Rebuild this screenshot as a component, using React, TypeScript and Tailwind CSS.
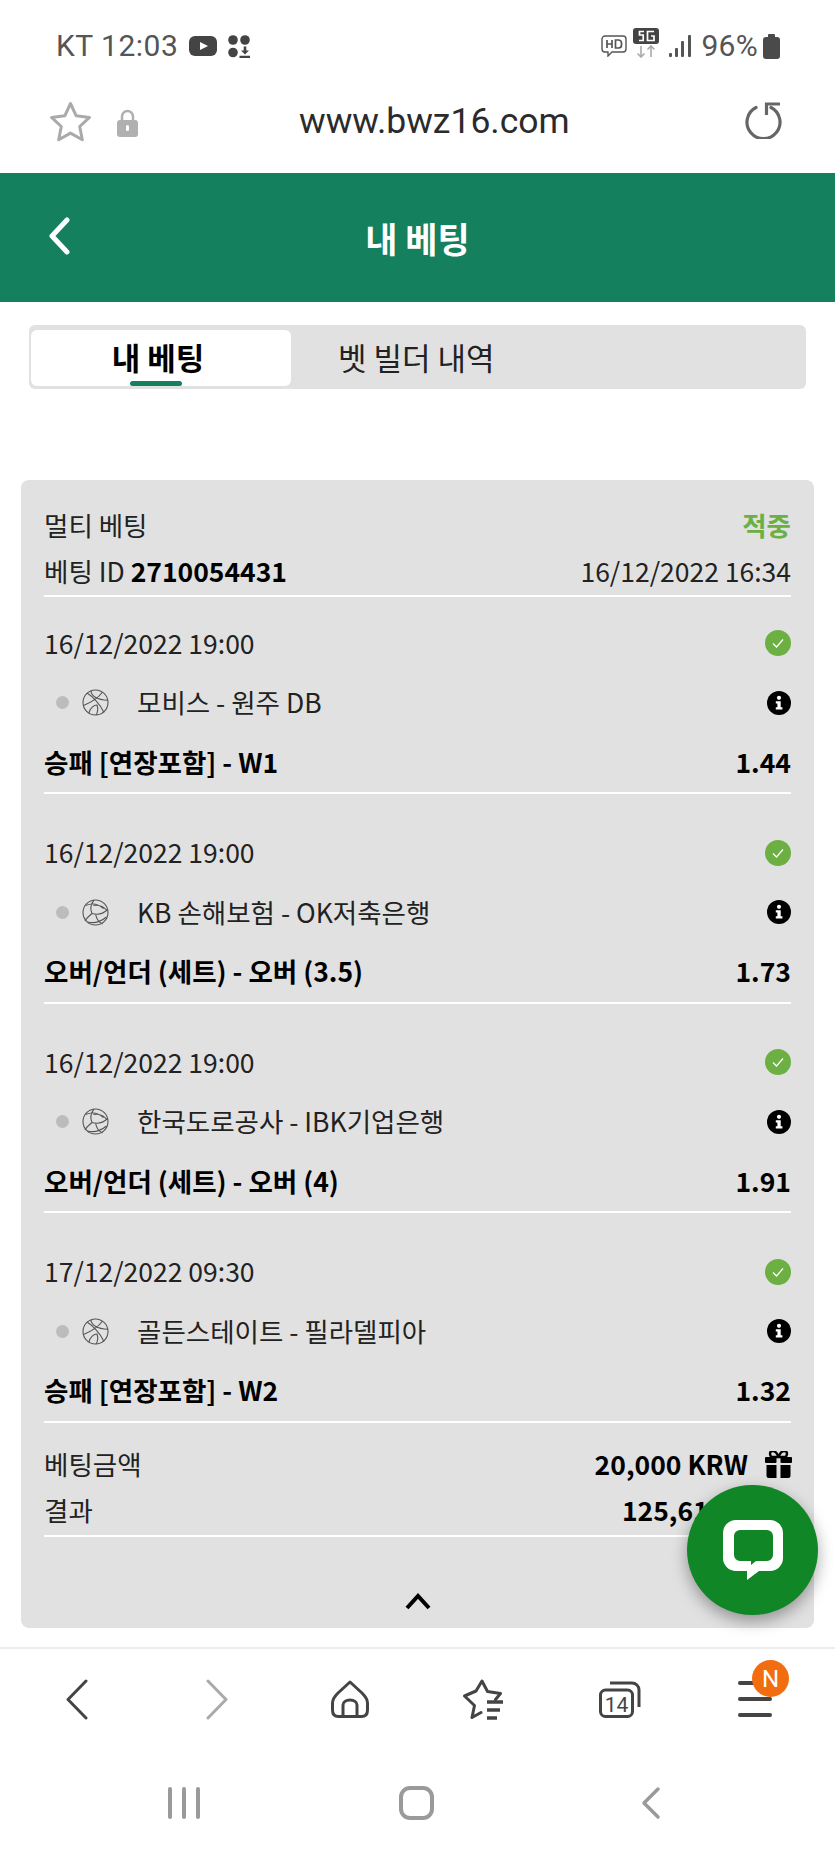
const bets = [
  { date: '16/12/2022 19:00', teams: '모비스 - 원주 DB', market: '승패 [연장포함] - W1', odds: '1.44', sport: 'basket' },
  { date: '16/12/2022 19:00', teams: 'KB 손해보험 - OK저축은행', market: '오버/언더 (세트) - 오버 (3.5)', odds: '1.73', sport: 'volley' },
  { date: '16/12/2022 19:00', teams: '한국도로공사 - IBK기업은행', market: '오버/언더 (세트) - 오버 (4)', odds: '1.91', sport: 'volley' },
  { date: '17/12/2022 09:30', teams: '골든스테이트 - 필라델피아', market: '승패 [연장포함] - W2', odds: '1.32', sport: 'basket' },
]

const BasketIcon = () => (
  <svg width="27" height="27" viewBox="0 0 27 27" fill="none" stroke="#555" strokeWidth="1.1">
    <circle cx="13.500" cy="13.500" r="12.500" />
    <path d="M5 4c5 3 13 11 17 19.500M20.500 3C17 8 10 13 1.500 16.500M9 1.800c0 5 6 9 17 9.500M7 24c1-5 5-8 8-8 1 3 1 7-1 10" />
  </svg>
)

const VolleyIcon = () => (
  <svg width="27" height="27" viewBox="0 0 27 27" fill="none" stroke="#555" strokeWidth="1.1">
    <circle cx="13.500" cy="13.500" r="12.500" />
    <path d="M12 1.200C9 5 8 10 10 14.500M3.500 6.500c6-2.500 13-1.500 18 3M25.500 12c-4-5-9-6.500-14-5.500M10 14.500c5.500 1.500 11 .5 15.500-4M10 14.500c-3 2.500-6 5-7 7.500M13.500 15c1 5 3.500 8.500 7 10M5.500 23c6 1.500 13 0 19-5" />
  </svg>
)

const CheckBadge = () => (
  <svg width="26" height="26" viewBox="0 0 26 26">
    <circle cx="13" cy="13" r="13" fill="#6cb043" />
    <path d="M8 13.500l3.500 3.500L18 9.500" fill="none" stroke="#fff" strokeWidth="1.200" />
  </svg>
)

const InfoBadge = () => (
  <svg width="24" height="24" viewBox="0 0 24 24">
    <circle cx="12" cy="12" r="12" fill="#000" />
    <circle cx="12" cy="6.800" r="2.100" fill="#fff" />
    <path d="M8.800 10.300h4.900V16.300h1.700v2.200H8.800v-2.200h1.600v-3.800H8.800z" fill="#fff" />
  </svg>
)

const GiftIcon = () => (
  <svg width="27" height="27" viewBox="0 0 27 27" fill="#000">
    <path d="M13.500 6C12 1.500 9.500 0 7.500 0 5 0 4 3.500 6.500 6zM13.500 6C15 1.500 17.500 0 19.500 0c2.500 0 3.500 3.500 1 6z" fill="none" stroke="#000" strokeWidth="2.400" />
    <rect x="0" y="6" width="11.500" height="6" rx="1" />
    <rect x="15.500" y="6" width="11.500" height="6" rx="1" />
    <path d="M1.500 14h10v13H4a2.500 2.500 0 0 1-2.500-2.500zM15.500 14h10v10.500A2.500 2.500 0 0 1 23 27h-7.500z" />
  </svg>
)

const StatusBar = () => (
  <div className="flex h-[92px] items-center justify-between pl-[56px] pr-[55px] font-['Roboto',sans-serif] text-[#555]">
    <div className="flex items-center">
      <span className="w-[133px] text-[30px] leading-none tracking-[0.5px]">KT 12:03</span>
      <svg width="28" height="20" viewBox="0 0 28 20">
        <rect width="28" height="20" rx="6" fill="#444" />
        <path d="M11 6l8 4-8 4z" fill="#fff" />
      </svg>
      <svg className="ml-[11px]" width="22" height="23" viewBox="0 0 22 23" fill="#444">
        <circle cx="5" cy="5" r="4.800" />
        <circle cx="17" cy="5" r="4.800" />
        <circle cx="5" cy="17.500" r="4.800" />
        <path d="M15.700 11.500h2.600v4h2.700l-4 4-4-4h2.700zM11.500 20.700h11V23h-11z" />
      </svg>
    </div>
    <div className="flex items-center">
      <svg width="26" height="22" viewBox="0 0 26 22" fill="none" stroke="#555" strokeWidth="1.400">
        <path d="M4 1h18a3 3 0 0 1 3 3v10a3 3 0 0 1-3 3H11l-4 4v-4H4a3 3 0 0 1-3-3V4a3 3 0 0 1 3-3z" />
        <path d="M6 5v8M11 5v8M6 9h5M14.500 5v8h3a3 3 0 0 0 3-3V8a3 3 0 0 0-3-3z" strokeWidth="1.700" />
      </svg>
      <svg className="ml-[6px] -mt-[6px]" width="26" height="30" viewBox="0 0 26 30">
        <rect width="26" height="16" rx="3" fill="#444" />
        <path d="M11 3.500H6.500v3.500h3.700v5.500H6M21 3.500h-6.500v9H21V8h-3" fill="none" stroke="#fff" strokeWidth="1.700" />
        <path d="M8 18v11M4.500 25.500L8 29l3.500-3.500M18 29V18M14.500 21.500L18 18l3.500 3.500" fill="none" stroke="#aaa" strokeWidth="1.600" />
      </svg>
      <svg className="ml-[10px]" width="22" height="22" viewBox="0 0 22 22" fill="#555">
        <rect x="0" y="18" width="3" height="4" rx="1" />
        <rect x="6" y="13" width="3" height="9" rx="1" />
        <rect x="12" y="6" width="3" height="16" rx="1" />
        <rect x="19" y="0" width="3" height="22" rx="1" />
      </svg>
      <span className="ml-[10px] text-[30px] leading-none tracking-[0.3px]">96%</span>
      <svg className="ml-[5px]" width="17" height="25" viewBox="0 0 17 25" fill="#4a4a4a">
        <rect x="5" width="7" height="4" rx="1" />
        <rect y="3" width="17" height="22" rx="3" />
      </svg>
    </div>
  </div>
)

const UrlBar = () => (
  <div className="flex h-[81px] items-center pb-[20px] pl-[49px] pr-[51px] font-['Roboto',sans-serif]">
    <svg width="43" height="43" viewBox="0 0 43 43" fill="none" stroke="#aaa" strokeWidth="3" strokeLinejoin="round">
      <path d="M21.500 2.500l5.700 12.300 13.300 1.600-9.800 9.100 2.600 13.200-11.800-6.600-11.800 6.600 2.600-13.200-9.800-9.100 13.300-1.600z" />
    </svg>
    <svg className="ml-[25px]" width="21" height="28" viewBox="0 0 21 28">
      <path d="M5 13V7.500a5.500 5.500 0 0 1 11 0V13" fill="none" stroke="#b0b0b0" strokeWidth="2.500" />
      <rect x="0" y="11" width="21" height="17" rx="3" fill="#b0b0b0" />
      <rect x="9" y="16" width="3" height="6" rx="1.500" fill="#fff" />
    </svg>
    <span className="ml-[161px] -mt-[2px] flex-1 text-[35.500px] leading-none text-[#2b2b2b]">www.bwz16.com</span>
    <svg className="-mt-[6px] -ml-[2px]" width="40" height="38" viewBox="0 0 40 38" fill="none" stroke="#666" strokeWidth="3.200">
      <path d="M12 6.500a16.500 16.500 0 1 0 15 0" strokeLinecap="round" />
      <path d="M22.500 14V3H36" />
    </svg>
  </div>
)

const BetRow = ({ bet, first }: { bet: (typeof bets)[number]; first: boolean }) => (
  <div className={first ? 'flex h-[197px] flex-col border-b-[2px] border-white pt-[16px]' : 'mt-[12.500px] flex h-[197px] flex-col border-b-[2px] border-white pt-[16px]'}>
    <div className="flex h-[60px] shrink-0 items-center justify-between">
      <span>{bet.date}</span>
      <span className="flex"><CheckBadge /></span>
    </div>
    <div className="flex h-[59px] shrink-0 items-center justify-between">
      <div className="flex items-center">
        <span className="ml-[12px] h-[13px] w-[13px] rounded-full bg-[#bcbcbc]" />
        <span className="ml-[13px] flex w-[27px]">{bet.sport === 'basket' ? <BasketIcon /> : <VolleyIcon />}</span>
        <span className="ml-[28px]">{bet.teams}</span>
      </div>
      <InfoBadge />
    </div>
    <div className="flex h-[60px] shrink-0 items-center justify-between font-bold text-black">
      <span>{bet.market}</span>
      <span>{bet.odds}</span>
    </div>
  </div>
)

const BottomBar = () => (
  <div className="mt-[19px] border-t-[2px] border-[#ececec]">
    <div className="flex h-[108px] items-center pb-[8px] pl-[65px]">
      <svg width="23" height="41" viewBox="0 0 23 41" fill="none" stroke="#444" strokeWidth="3">
        <path d="M21 2L3 20.500 21 39" strokeLinecap="round" strokeLinejoin="round" />
      </svg>
      <svg className="ml-[118px]" width="23" height="41" viewBox="0 0 23 41" fill="none" stroke="#aaa" strokeWidth="3">
        <path d="M2 2l18 18.500L2 39" strokeLinecap="round" strokeLinejoin="round" />
      </svg>
      <svg className="ml-[102px]" width="38" height="38" viewBox="0 0 38 38" fill="none" stroke="#444" strokeWidth="3">
        <path d="M19 2L7 13c-4 4-5.500 6-5.500 10v7c0 4 2 6.500 6 6.500h23c4 0 6-2.500 6-6.500v-7c0-4-1.500-6-5.500-10z" strokeLinejoin="round" />
        <path d="M12 36V25c0-3 3-5 7-5s7 2 7 5v11" />
      </svg>
      <svg className="ml-[93px]" width="42" height="41" viewBox="0 0 42 41" fill="none" stroke="#444" strokeWidth="3">
        <path d="M14 12L20 2l5.500 10.500 13 2-5 6M10 38.500l2.500-12-10-9.500 11.500-5M10 38.500l9-5" strokeLinejoin="round" strokeLinecap="round" />
        <path d="M25 23h16M25 31h13M25 39h10" strokeWidth="3.500" />
      </svg>
      <svg className="ml-[95px]" width="42" height="37" viewBox="0 0 42 37" fill="none" stroke="#444" strokeWidth="3">
        <rect x="1.500" y="9" width="32" height="26.500" rx="5" />
        <path d="M11 2h22a7 7 0 0 1 7 7v17" />
        <text x="17.500" y="31" textAnchor="middle" fontSize="21" fill="#444" stroke="none" fontFamily="Roboto">14</text>
      </svg>
      <div className="relative ml-[97px] flex w-[34px] flex-col gap-[12px]">
        <span className="h-[4px] rounded bg-[#444]" />
        <span className="h-[4px] rounded bg-[#444]" />
        <span className="h-[4px] rounded bg-[#444]" />
        <span className="absolute left-[14px] -top-[21px] flex h-[37px] w-[37px] items-center justify-center rounded-full bg-[#f26d0f] font-['Roboto',sans-serif] text-[24px] leading-none text-white">N</span>
      </div>
    </div>
    <div className="flex h-[92px] items-center pl-[168px]">
      <div className="flex gap-[10px]">
        <span className="h-[32px] w-[4px] rounded bg-[#9a9a9a]" />
        <span className="h-[32px] w-[4px] rounded bg-[#9a9a9a]" />
        <span className="h-[32px] w-[4px] rounded bg-[#9a9a9a]" />
      </div>
      <span className="ml-[199px] h-[34px] w-[35px] rounded-[11px] border-[4px] border-[#9a9a9a]" />
      <svg className="ml-[207px]" width="20" height="34" viewBox="0 0 20 34" fill="none" stroke="#9a9a9a" strokeWidth="3.500">
        <path d="M17 3L3 17l14 14" strokeLinecap="round" strokeLinejoin="round" />
      </svg>
    </div>
  </div>
)

const App = () => (
  <div className="relative h-[1856px] w-[835px] overflow-hidden bg-white font-['Noto_Sans_CJK_KR',sans-serif]">
    <StatusBar />
    <UrlBar />

    <div className="relative flex h-[129px] items-center justify-center bg-[#14805e]">
      <svg className="absolute left-[47px] top-[44px]" width="24" height="38" viewBox="0 0 24 38" fill="none" stroke="#fff" strokeWidth="5">
        <path d="M20 3L5 19l15 16" strokeLinecap="round" strokeLinejoin="round" />
      </svg>
      <span className="text-[35px] font-bold leading-none text-white">내 베팅</span>
    </div>

    <div className="mx-[29px] mt-[23px] flex h-[64px] rounded-[6px] bg-[#e1e1e1] pb-[3px] pl-[2px] pt-[5px] text-[31px] leading-none">
      <div className="relative flex w-[260px] items-center justify-center rounded-[6px] bg-white pb-[3px] pr-[6px] font-bold text-black">
        내 베팅
        <span className="absolute bottom-0 left-[99px] h-[5px] w-[52px] rounded-full bg-[#14805e]" />
      </div>
      <div className="flex items-center pb-[3px] pl-[47px] text-[#222]">벳 빌더 내역</div>
    </div>

    <div className="mx-[21px] mt-[91px] h-[1148px] rounded-[8px] bg-[#e1e1e1] px-[23px] text-[26.500px] leading-none text-[#222]">
      <div className="flex h-[117px] flex-col border-b-[2px] border-white">
        <div className="flex h-[68px] items-end justify-between pb-[10px]">
          <span>멀티 베팅</span>
          <span className="font-bold text-[#6cb043]">적중</span>
        </div>
        <div className="flex h-[46px] items-center justify-between">
          <span>베팅 ID <span className="font-bold text-black">2710054431</span></span>
          <span>16/12/2022 16:34</span>
        </div>
      </div>

      {bets.map((bet, i) => (
        <BetRow key={i} bet={bet} first={i === 0} />
      ))}

      <div className="flex h-[114px] flex-col border-b-[2px] border-white pt-[19px]">
        <div className="flex h-[46px] items-center justify-between">
          <span>베팅금액</span>
          <span className="flex items-center font-bold text-black">
            20,000 KRW
            <span className="ml-[17px] -mr-[1px] flex"><GiftIcon /></span>
          </span>
        </div>
        <div className="flex h-[46px] items-center justify-between">
          <span>결과</span>
          <span className="font-bold text-black">125,610 KRW</span>
        </div>
      </div>

      <div className="flex justify-center pt-[56px]">
        <svg width="26" height="17" viewBox="0 0 26 17" fill="none" stroke="#000" strokeWidth="4">
          <path d="M2 15L13 3l11 12" />
        </svg>
      </div>
    </div>

    <BottomBar />

    <div className="absolute left-[687px] top-[1485px] flex h-[130px] w-[131px] items-center justify-center rounded-full bg-[#118627] shadow-[0_6px_16px_rgba(0,0,0,0.35)]">
      <svg width="60" height="60" viewBox="0 0 60 60">
        <path
          fillRule="evenodd"
          fill="#fff"
          d="M13 0h34a13 13 0 0 1 13 13v25a13 13 0 0 1-13 13H36L24 60v-9H13A13 13 0 0 1 0 38V13A13 13 0 0 1 13 0zM17 10a6 6 0 0 0-6 6v19a6 6 0 0 0 6 6h11v4l5-4h11a6 6 0 0 0 6-6V16a6 6 0 0 0-6-6z"
        />
      </svg>
    </div>
  </div>
)

export default App
